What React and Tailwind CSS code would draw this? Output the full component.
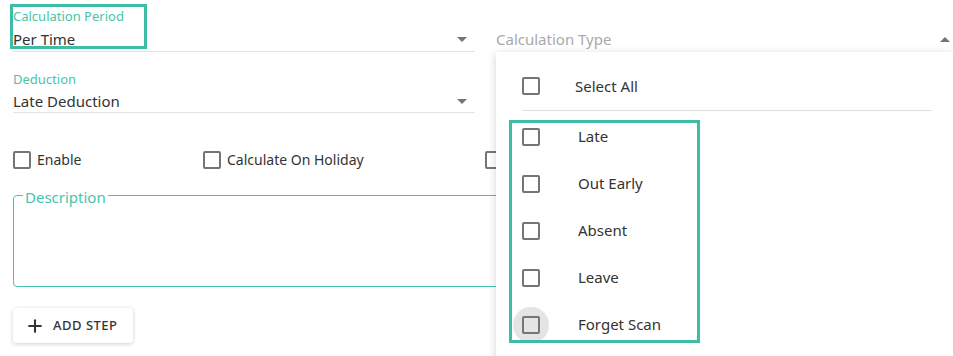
import { Plus } from 'lucide-react';

const Box = ({ hover }) => (
  <span className="relative flex items-center justify-center w-[18px] h-[18px]">
    {hover && <span className="absolute w-[36px] h-[36px] rounded-full bg-[#e4e4e4]" />}
    <span className="relative w-[18px] h-[18px] border-2 border-[#757575] rounded-[2px]" />
  </span>
);

const Caret = ({ up }) => (
  <span
    className={
      up
        ? 'w-0 h-0 border-x-[5px] border-x-transparent border-b-[5px] border-b-[#757575]'
        : 'w-0 h-0 border-x-[5px] border-x-transparent border-t-[5px] border-t-[#757575]'
    }
  />
);

const items = ['Late', 'Out Early', 'Absent', 'Leave', 'Forget Scan'];

export default function App() {
  return (
    <div
      className="relative w-[953px] h-[356px] overflow-hidden bg-white text-[#333]"
      style={{ fontFamily: '"Noto Sans", "Open Sans", sans-serif' }}
    >
      {/* Top row */}
      <div className="flex pl-[13px] pt-[8px] gap-[21px]">
        <div className="w-[462px]">
          <div className="text-[13px] leading-[16px] text-[#45c6ab]">Calculation Period</div>
          <div className="flex items-center justify-between h-[22px] mt-[4px] pr-[8px] text-[15px]">
            <span>Per Time</span>
            <Caret />
          </div>
          <div className="mt-[1px] border-b border-[#e3e3e3]" />
        </div>
        <div className="flex-1 pt-[20px]">
          <div className="flex items-center justify-between h-[22px] pr-[3px] text-[15px] text-[#a9a9a9]">
            <span>Calculation Type</span>
            <Caret up />
          </div>
        </div>
      </div>

      {/* Deduction */}
      <div className="ml-[13px] w-[462px] mt-[19px]">
        <div className="text-[13px] leading-[16px] text-[#45c6ab]">Deduction</div>
        <div className="flex items-center justify-between h-[22px] mt-[3px] pr-[8px] text-[15px]">
          <span>Late Deduction</span>
          <Caret />
        </div>
        <div className="border-b border-[#e3e3e3]" />
      </div>

      {/* Checkbox row */}
      <div className="flex items-center ml-[13px] mt-[36px] text-[14px]">
        <label className="flex items-center gap-[6px] w-[190px]">
          <Box />
          <span>Enable</span>
        </label>
        <label className="flex items-center gap-[6px] w-[282px]">
          <Box />
          <span>Calculate On Holiday</span>
        </label>
        <label className="flex items-center gap-[6px]">
          <Box />
        </label>
      </div>

      {/* Description */}
      <fieldset className="ml-[13px] mt-[18px] w-[927px] h-[99px] border border-[#45c6ab] rounded-[4px] px-[9px]">
        <legend className="px-[2px] text-[15px] leading-[14px] text-[#45c6ab]">
          <span className="relative top-[2px]">Description</span>
        </legend>
      </fieldset>

      {/* Add step */}
      <button className="ml-[13px] mt-[21px] flex items-center gap-[8px] w-[120px] h-[35px] pl-[12px] rounded-[4px] bg-white shadow-[0_1px_4px_rgba(0,0,0,0.2)] text-[13px] font-medium tracking-[0.5px] text-[#333]">
        <Plus size={20} strokeWidth={2.5} className="text-[#333]" />
        ADD STEP
      </button>

      {/* Annotation box around calculation period */}
      <div className="absolute left-[10px] top-[4px] w-[137px] h-[45px] border-[3px] border-[#3dbca6]" />

      {/* Dropdown menu */}
      <div className="absolute left-[496px] top-[52px] right-0 h-[320px] bg-white shadow-[0_2px_8px_rgba(0,0,0,0.18)]">
        <div className="px-[26px]">
          <div className="flex items-center h-[58px] pt-[10px] text-[15px]">
            <Box />
            <span className="ml-[35px]">Select All</span>
          </div>
          <div className="border-b border-[#e0e0e0] w-[410px]" />
          <div className="pt-[2px]">
            {items.map((t, i) => (
              <div key={t} className="flex items-center h-[47px] text-[15px]">
                <Box hover={i === items.length - 1} />
                <span className="ml-[38px]">{t}</span>
              </div>
            ))}
          </div>
        </div>
        {/* Annotation box around items */}
        <div className="absolute left-[13px] top-[68px] w-[191px] h-[223px] border-[3px] border-[#3dbca6]" />
      </div>
    </div>
  );
}
